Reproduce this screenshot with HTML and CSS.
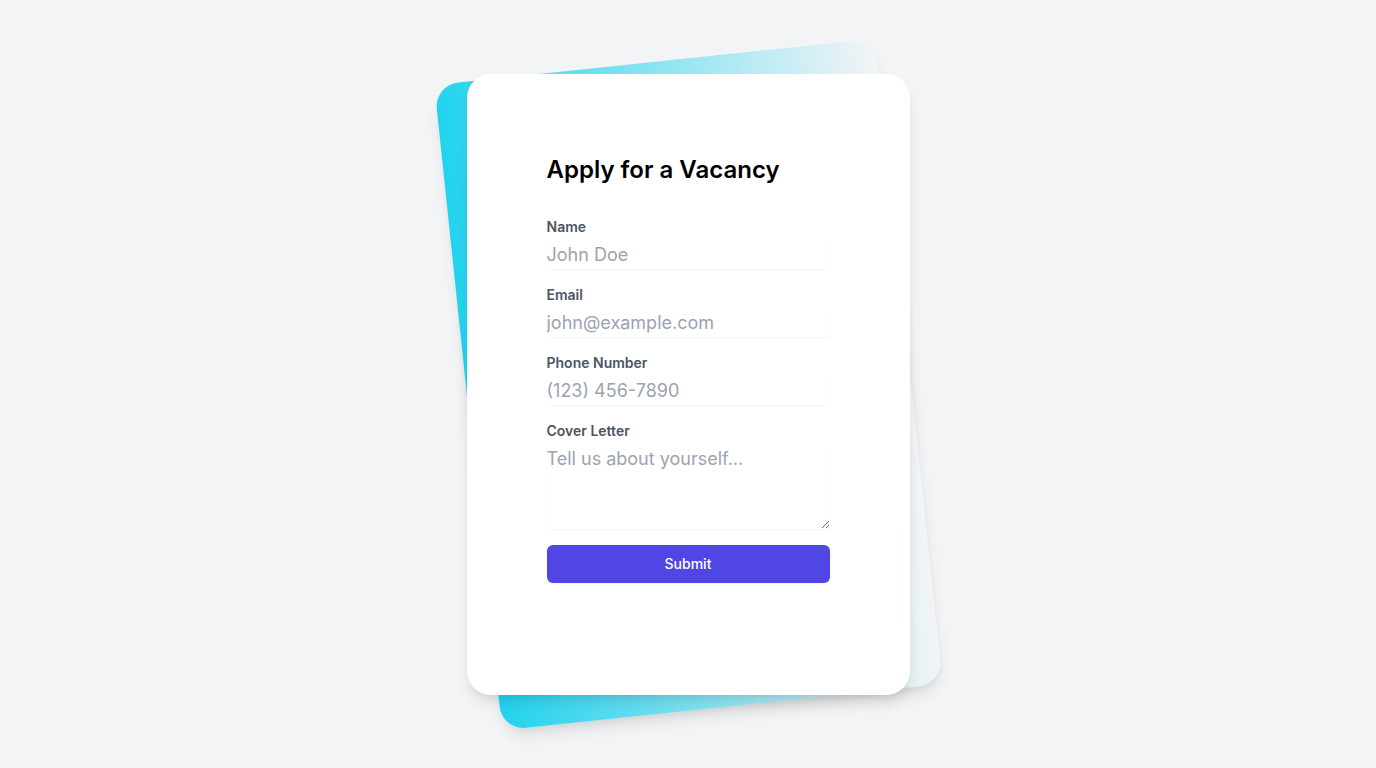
FILE: index.html
```html
<!DOCTYPE html>
<html lang="en">
<head>
<meta charset="utf-8">
<title>Apply for a Vacancy</title>
<link rel="stylesheet" href="styles.css">
</head>
<body>
<main class="page">
  <div class="stack">
    <div class="stack-bg"></div>
    <div class="card">
      <h1 class="title">Apply for a Vacancy</h1>
      <form class="form">
        <div class="field">
          <label class="label" for="name">Name</label>
          <input class="control" id="name" type="text" placeholder="John Doe">
        </div>
        <div class="field">
          <label class="label" for="email">Email</label>
          <input class="control" id="email" type="email" placeholder="john@example.com">
        </div>
        <div class="field">
          <label class="label" for="phone">Phone Number</label>
          <input class="control" id="phone" type="tel" placeholder="(123) 456-7890">
        </div>
        <div class="field">
          <label class="label" for="cover">Cover Letter</label>
          <textarea class="control area" id="cover" rows="3" placeholder="Tell us about yourself..."></textarea>
        </div>
        <button class="submit" type="button">Submit</button>
      </form>
    </div>
  </div>
</main>
</body>
</html>
```

FILE: styles.css
```css
* { box-sizing: border-box; }

html, body {
  margin: 0;
  padding: 0;
}

body {
  background: #f3f4f6;
  font-family: Inter, "Noto Sans", "Liberation Sans", sans-serif;
  color: #111827;
}

.page {
  min-height: 100vh;
  display: flex;
  align-items: center;
  justify-content: center;
}

.stack {
  position: relative;
  width: 443px;
}

.stack-bg {
  position: absolute;
  top: -14px;
  bottom: -14px;
  left: 0;
  right: 0;
  border-radius: 24px;
  background: linear-gradient(to right, #22d3ee, rgba(34, 211, 238, 0));
  box-shadow: 0 10px 15px -3px rgba(0, 0, 0, 0.1), 0 4px 6px -2px rgba(0, 0, 0, 0.05);
  transform: rotate(-6deg);
}

.card {
  position: relative;
  background: #ffffff;
  border-radius: 24px;
  box-shadow: 0 10px 15px -3px rgba(0, 0, 0, 0.1), 0 4px 6px -2px rgba(0, 0, 0, 0.05);
  padding: 80px;
}

.title {
  margin: 0;
  font-size: 24px;
  line-height: 32px;
  font-weight: 600;
  color: #000000;
}

.form {
  display: flex;
  flex-direction: column;
  gap: 16px;
  padding: 31px 0 32px;
  margin: 0;
}

.field {
  display: flex;
  flex-direction: column;
  gap: 4px;
}

.label {
  font-size: 14px;
  line-height: 20px;
  font-weight: 600;
  color: #4b5563;
}

.control {
  display: block;
  width: 100%;
  height: 28px;
  margin: 0;
  padding: 0;
  border: 0;
  outline: none;
  border-radius: 6px;
  background: #ffffff;
  box-shadow: 0 1px 2px 0 rgba(0, 0, 0, 0.05);
  font-family: inherit;
  font-size: 18px;
  line-height: 28px;
  color: #111827;
}

.control::placeholder {
  color: #9ca3af;
  opacity: 1;
}

.area {
  height: 84px;
  resize: vertical;
}

.submit {
  display: block;
  width: 100%;
  height: 38px;
  margin: 0;
  padding: 8px 16px;
  border: 1px solid transparent;
  border-radius: 6px;
  background: #4f46e5;
  box-shadow: 0 1px 2px 0 rgba(0, 0, 0, 0.05);
  color: #ffffff;
  font-family: inherit;
  font-size: 14px;
  line-height: 20px;
  font-weight: 500;
  cursor: pointer;
}
```
